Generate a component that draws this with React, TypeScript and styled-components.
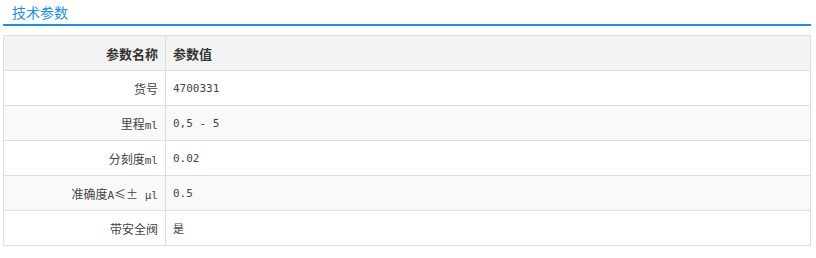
import React from "react";
import styled, { createGlobalStyle } from "styled-components";

const Global = createGlobalStyle`
  html, body { margin: 0; padding: 0; background: #fff; }
  body { font-family: "Noto Sans CJK SC", "DejaVu Sans", sans-serif; }
`;

const Wrap = styled.div`
  width: 808px;
  margin: 0 5px 0 3px;
`;

const Title = styled.div`
  height: 24px;
  border-bottom: 2px solid #1e8fe3;
  box-sizing: content-box;
  display: flex;
  align-items: center;
  padding-left: 9px;
  color: #1a8fe6;
  font-size: 14px;
  line-height: 24px;
`;

const Table = styled.table`
  margin-top: 9px;
  width: 808px;
  border-collapse: collapse;
  border: 1px solid #dedede;
  font-size: 12px;
  color: #444;
`;

const Row = styled.tr<{ $bg: string }>`
  background: ${(p) => p.$bg};
  height: 35px;
`;

const NameCell = styled.td<{ $head?: boolean }>`
  width: 146px;
  border: 1px solid #dedede;
  text-align: right;
  padding: 0 7px 0 8px;
  font-size: ${(p) => (p.$head ? "13px" : "12px")};
  font-weight: ${(p) => (p.$head ? 700 : 400)};
  color: ${(p) => (p.$head ? "#333" : "#444")};
`;

const ValueCell = styled.td<{ $head?: boolean }>`
  border: 1px solid #dedede;
  text-align: left;
  padding: 0 8px 0 7px;
  font-size: ${(p) => (p.$head ? "13px" : "11px")};
  font-weight: ${(p) => (p.$head ? 700 : 400)};
  color: ${(p) => (p.$head ? "#333" : "#444")};
  font-family: ${(p) =>
    p.$head ? "inherit" : '"DejaVu Sans Mono", "Noto Sans CJK SC", monospace'};
`;

const Unit = styled.span`
  font-family: "DejaVu Sans Mono", monospace;
  font-size: 11px;
`;

const Sym = styled.span`
  font-family: "Noto Sans CJK SC", sans-serif;
  font-size: 12px;
`;

const rows: { name: React.ReactNode; value: string }[] = [
  { name: "货号", value: "4700331" },
  { name: <>里程<Unit>ml</Unit></>, value: "0,5 - 5" },
  { name: <>分刻度<Unit>ml</Unit></>, value: "0.02" },
  {
    name: (
      <>
        准确度<Unit>A</Unit><Sym>≤±</Sym><Unit> μl</Unit>
      </>
    ),
    value: "0.5",
  },
  { name: "带安全阀", value: "是" },
];

export default function App() {
  return (
    <>
      <Global />
      <Wrap>
        <Title>技术参数</Title>
        <Table>
          <tbody>
            <Row $bg="#f3f3f3">
              <NameCell $head>参数名称</NameCell>
              <ValueCell $head>参数值</ValueCell>
            </Row>
            {rows.map((r, i) => (
              <Row key={i} $bg={i % 2 === 1 ? "#f9f9f9" : "#fff"}>
                <NameCell>{r.name}</NameCell>
                <ValueCell>{r.value}</ValueCell>
              </Row>
            ))}
          </tbody>
        </Table>
      </Wrap>
    </>
  );
}
